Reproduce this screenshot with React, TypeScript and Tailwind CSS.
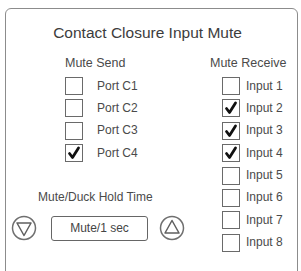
import React from "react";

const font = { fontFamily: '"Liberation Sans", Arial, sans-serif' };

function Box({ checked }: { checked?: boolean }) {
  return (
    <div className="w-[18px] h-[18px] border-[1.5px] border-[#6a6a6a] bg-white flex items-center justify-center shrink-0">
      {checked && (
        <svg width="14" height="14" viewBox="0 0 14 14">
          <path d="M2.5 7.5 L5.5 11.5 L11.5 2" fill="none" stroke="#111" strokeWidth="2.8" strokeLinecap="round" strokeLinejoin="round" />
        </svg>
      )}
    </div>
  );
}

function Circle({ up }: { up?: boolean }) {
  return (
    <svg width="26" height="26" viewBox="0 0 26 26" className="shrink-0">
      <circle cx="13" cy="13" r="11.5" fill="none" stroke="#6f6f6f" strokeWidth="1.5" />
      {up ? (
        <path d="M13 5.5 L20 18 L6 18 Z" fill="none" stroke="#5f5f5f" strokeWidth="1.5" strokeLinejoin="round" />
      ) : (
        <path d="M6 8 L20 8 L13 20.5 Z" fill="none" stroke="#5f5f5f" strokeWidth="1.5" strokeLinejoin="round" />
      )}
    </svg>
  );
}

export default function App() {
  const left = [
    { label: "Port C1", c: false },
    { label: "Port C2", c: false },
    { label: "Port C3", c: false },
    { label: "Port C4", c: true },
  ];
  const right = [
    { label: "Input 1", c: false },
    { label: "Input 2", c: true },
    { label: "Input 3", c: true },
    { label: "Input 4", c: true },
    { label: "Input 5", c: false },
    { label: "Input 6", c: false },
    { label: "Input 7", c: false },
    { label: "Input 8", c: false },
  ];
  return (
    <div className="w-[301px] h-[271px] bg-white overflow-hidden pt-[8px] pl-[5px]" style={font}>
      <div className="w-[293px] h-[272px] border border-[#8c8c8c] rounded-[6px] flex flex-col">
        <div className="pt-[15px] text-center text-[15.5px] leading-[18px] text-[#3c3c3c] pr-[8px]">
          Contact Closure Input Mute
        </div>
        <div className="flex mt-[14px]">
          <div className="w-[194px] flex flex-col">
            <div className="ml-[59px] text-[12.5px] leading-[15px] text-[#4a4a4a]">Mute Send</div>
            <div className="ml-[59px] mt-[6px] flex flex-col gap-[4.4px]">
              {left.map((r) => (
                <div key={r.label} className="flex items-center gap-[14px] h-[18px]">
                  <Box checked={r.c} />
                  <span className="text-[12px] leading-[15px] text-[#4a4a4a]">{r.label}</span>
                </div>
              ))}
            </div>
            <div className="ml-[32px] mt-[28px] text-[12px] leading-[15px] text-[#4a4a4a]">Mute/Duck Hold Time</div>
            <div className="ml-[5px] mt-[10px] flex items-center">
              <Circle />
              <div className="ml-[14px] w-[97px] h-[25px] border-[1.5px] border-[#666] rounded-[3px] flex items-center justify-center text-[12px] text-[#444]">
                Mute/1 sec
              </div>
              <div className="ml-[11px]">
                <Circle up />
              </div>
            </div>
          </div>
          <div className="flex flex-col">
            <div className="ml-[10px] text-[12.5px] leading-[15px] text-[#4a4a4a]">Mute Receive</div>
            <div className="ml-[22px] mt-[6px] flex flex-col gap-[4.4px]">
              {right.map((r) => (
                <div key={r.label} className="flex items-center gap-[6px] h-[18px]">
                  <Box checked={r.c} />
                  <span className="text-[12px] leading-[15px] text-[#4a4a4a]">{r.label}</span>
                </div>
              ))}
            </div>
          </div>
        </div>
      </div>
    </div>
  );
}
